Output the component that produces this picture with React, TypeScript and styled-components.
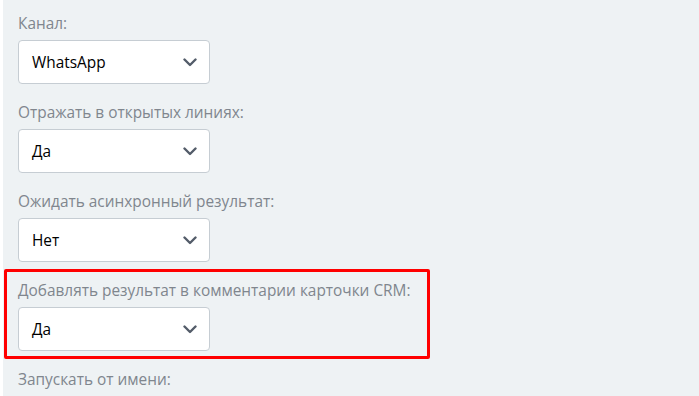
import React from 'react';
import styled, { createGlobalStyle } from 'styled-components';

const GlobalStyle = createGlobalStyle`
  html, body {
    margin: 0;
    padding: 0;
    background: #ffffff;
  }
  body {
    font-family: "Open Sans", "Noto Sans", "Liberation Sans", sans-serif;
  }
`;

const Page = styled.div`
  margin-left: 3px;
  min-height: 396px;
  background: #eef2f4;
  padding: 14px 0 0 15px;
  box-sizing: border-box;
  overflow: hidden;
`;

const Field = styled.div<{ $highlight?: boolean }>`
  position: relative;
  width: 192px;
  margin-bottom: 19px;

  ${({ $highlight }) =>
    $highlight &&
    `
    &::after {
      content: '';
      position: absolute;
      left: -14px;
      top: -12px;
      width: 426px;
      height: 90px;
      border: 3px solid #ff0000;
      border-radius: 2px;
      box-sizing: border-box;
      pointer-events: none;
    }
  `}
`;

const Label = styled.div`
  height: 20px;
  line-height: 20px;
  font-size: 15.4px;
  color: #80868e;
  white-space: nowrap;
  margin-bottom: 6px;
`;

const Select = styled.div`
  display: flex;
  align-items: center;
  justify-content: space-between;
  height: 44px;
  box-sizing: border-box;
  padding: 0 12px 0 13px;
  background: #ffffff;
  border: 1px solid #c6cdd3;
  border-radius: 4px;
  font-size: 15.4px;
  color: #000000;
`;

const Chevron = () => (
  <svg width="14" height="9" viewBox="0 0 14 9" fill="none">
    <path d="M1.5 1.5 L7 7 L12.5 1.5" stroke="#535c69" strokeWidth="2.4" strokeLinecap="round" strokeLinejoin="round" />
  </svg>
);

const fields = [
  { label: 'Канал:', value: 'WhatsApp' },
  { label: 'Отражать в открытых линиях:', value: 'Да' },
  { label: 'Ожидать асинхронный результат:', value: 'Нет' },
  { label: 'Добавлять результат в комментарии карточки CRM:', value: 'Да', highlight: true },
];

const App: React.FC = () => {
  return (
    <>
      <GlobalStyle />
      <Page>
        {fields.map((f) => (
          <Field key={f.label} $highlight={f.highlight}>
            <Label>{f.label}</Label>
            <Select>
              <span>{f.value}</span>
              <Chevron />
            </Select>
          </Field>
        ))}
        <Field>
          <Label>Запускать от имени:</Label>
        </Field>
      </Page>
    </>
  );
};

export default App;
